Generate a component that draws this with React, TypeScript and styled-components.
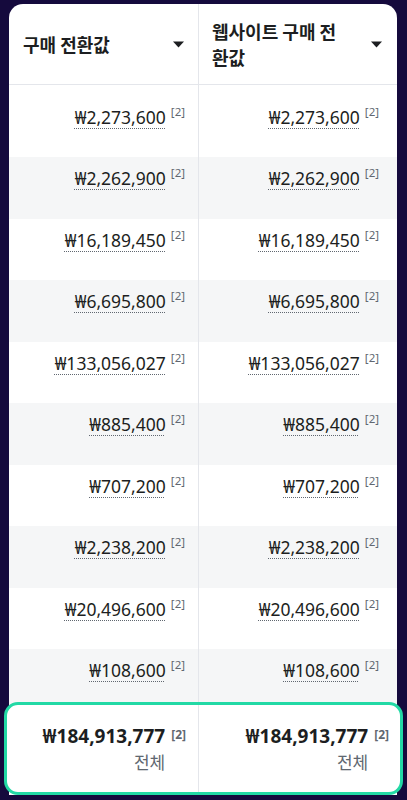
import React from "react";
import styled, { createGlobalStyle } from "styled-components";

const GlobalStyle = createGlobalStyle`
  html, body {
    margin: 0;
    padding: 0;
    background: #150a3d;
  }
  body {
    font-family: "Noto Sans", "Noto Sans CJK KR", sans-serif;
    color: #1c1e21;
  }
`;

const Page = styled.div`
  width: 407px;
  height: 800px;
  padding: 4px 10px 0 9px;
  box-sizing: border-box;
  overflow: hidden;
`;

const Card = styled.div`
  background: #ffffff;
  border-radius: 14px 14px 0 0;
  display: flex;
  flex-direction: column;
`;

const Row = styled.div<{ $shade?: boolean; $h: number }>`
  display: grid;
  grid-template-columns: 190px 1fr;
  height: ${(p) => p.$h}px;
  background: ${(p) => (p.$shade ? "#f5f6f7" : "#ffffff")};
`;

const HeaderRow = styled.div`
  display: grid;
  grid-template-columns: 190px 1fr;
  height: 81px;
  border-bottom: 1px solid #e4e6eb;
  box-sizing: border-box;
`;

const HeadCell = styled.div<{ $left?: boolean; $padR: number }>`
  display: flex;
  align-items: center;
  justify-content: space-between;
  gap: 12px;
  padding: 0 ${(p) => p.$padR}px 0 ${(p) => (p.$left ? 14 : 13)}px;
  border-right: ${(p) => (p.$left ? "1px solid #e4e6eb" : "none")};
`;

const HeadText = styled.div`
  font-family: "Noto Sans CJK KR", sans-serif;
  font-weight: 700;
  font-size: 18px;
  line-height: 26px;
  color: #1c1e21;
`;

const Caret = styled.svg`
  flex: none;
  width: 11px;
  height: 7px;
`;

const Cell = styled.div<{ $left?: boolean; $top: number; $padR: number }>`
  display: flex;
  justify-content: flex-end;
  align-items: flex-start;
  padding: ${(p) => p.$top}px ${(p) => p.$padR}px 0 0;
  border-right: ${(p) => (p.$left ? "1px solid #e4e6eb" : "none")};
`;

const Amount = styled.span`
  font-size: 17.5px;
  line-height: 22px;
  color: #1c1e21;
  text-decoration: underline dotted #606770;
  text-decoration-thickness: 1px;
  text-underline-offset: 4px;
`;

const Note = styled.span<{ $strong?: boolean }>`
  font-size: ${(p) => (p.$strong ? 12 : 11.5)}px;
  font-weight: ${(p) => (p.$strong ? 700 : 400)};
  line-height: 14px;
  color: #606770;
  margin-left: ${(p) => (p.$strong ? 6 : 5)}px;
  margin-top: ${(p) => (p.$strong ? 4 : -1)}px;
`;

const Footer = styled.div`
  margin: -8.5px -6px 0 -5px;
  height: 93px;
  box-sizing: border-box;
  border: 3px solid #22d9a5;
  border-radius: 14px;
  background: #ffffff;
  display: grid;
  grid-template-columns: 192px 1fr;
  position: relative;
`;

const FootCell = styled.div<{ $left?: boolean; $padR: number }>`
  display: flex;
  justify-content: flex-end;
  align-items: flex-start;
  padding: 19px ${(p) => p.$padR}px 0 0;
  border-right: ${(p) => (p.$left ? "1px solid #e4e6eb" : "none")};
`;

const FootStack = styled.div`
  display: flex;
  flex-direction: column;
  align-items: flex-end;
  gap: 3px;
`;

const Total = styled.span`
  font-size: 19px;
  font-weight: 700;
  line-height: 24px;
  color: #1c1e21;
`;

const Scope = styled.span`
  font-family: "Noto Sans CJK KR", sans-serif;
  font-size: 17px;
  line-height: 22px;
  color: #606770;
`;

const values = [
  "₩2,273,600",
  "₩2,262,900",
  "₩16,189,450",
  "₩6,695,800",
  "₩133,056,027",
  "₩885,400",
  "₩707,200",
  "₩2,238,200",
  "₩20,496,600",
  "₩108,600",
];

const DownCaret = () => (
  <Caret viewBox="0 0 11 7">
    <path d="M0 0.5 L11 0.5 L5.5 6.5 Z" fill="#1c1e21" />
  </Caret>
);

export default function App() {
  return (
    <>
      <GlobalStyle />
      <Page>
        <Card>
          <HeaderRow>
            <HeadCell $left $padR={14}>
              <HeadText>구매 전환값</HeadText>
              <DownCaret />
            </HeadCell>
            <HeadCell $padR={15}>
              <HeadText>
                웹사이트 구매 전
                <br />
                환값
              </HeadText>
              <DownCaret />
            </HeadCell>
          </HeaderRow>
          {values.map((v, i) => (
            <Row key={i} $shade={i % 2 === 1} $h={i === 0 ? 72 : 61.5}>
              <Cell $left $top={i === 0 ? 21 : 10} $padR={13}>
                <Amount>{v}</Amount>
                <Note>[2]</Note>
              </Cell>
              <Cell $top={i === 0 ? 21 : 10} $padR={18}>
                <Amount>{v}</Amount>
                <Note>[2]</Note>
              </Cell>
            </Row>
          ))}
          <Footer>
            <FootCell $left $padR={12}>
              <FootStack>
                <Total>₩184,913,777</Total>
                <Scope>전체</Scope>
              </FootStack>
              <Note $strong>[2]</Note>
            </FootCell>
            <FootCell $padR={11}>
              <FootStack>
                <Total>₩184,913,777</Total>
                <Scope>전체</Scope>
              </FootStack>
              <Note $strong>[2]</Note>
            </FootCell>
          </Footer>
        </Card>
      </Page>
    </>
  );
}
